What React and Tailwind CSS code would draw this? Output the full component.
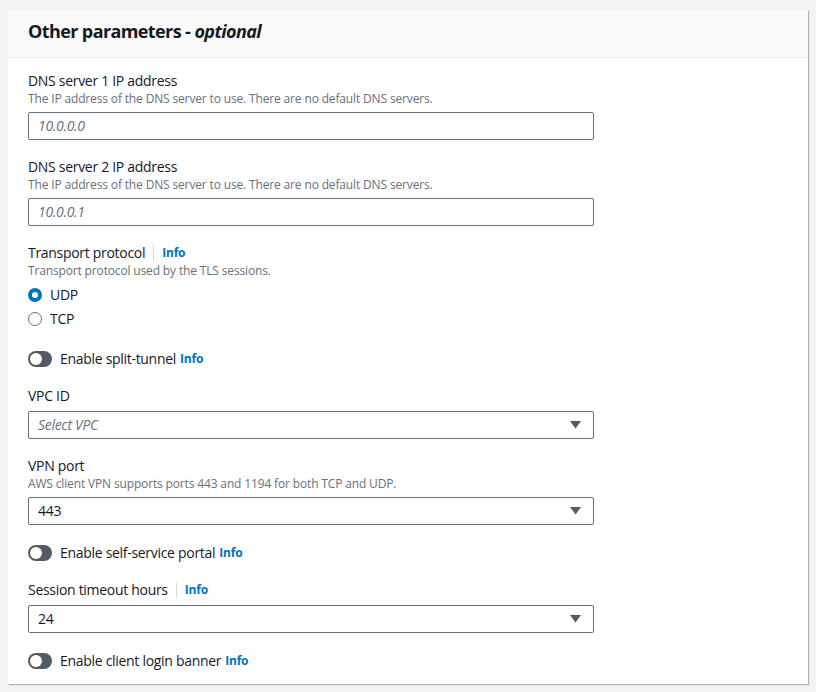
import React from "react";

const font = { fontFamily: '"Open Sans", "Noto Sans", Arial, sans-serif' };

function Info() {
  return <span className="text-xs font-bold tracking-[-0.2px] text-[#0073bb]">Info</span>;
}

function Label({ children, info, desc }) {
  return (
    <div>
      <div className="flex items-center h-5 text-sm tracking-[-0.3px] text-[#16191f]">
        <span>{children}</span>
        {info && (
          <>
            <span className="mx-2 h-4 w-px bg-[#d5dbdb]" />
            <Info />
          </>
        )}
      </div>
      {desc && <div className="h-4 text-xs leading-4 tracking-[-0.15px] text-[#687078]">{desc}</div>}
    </div>
  );
}

function TextInput({ placeholder }) {
  return (
    <div className="mt-[5px] flex h-7 w-[566px] items-center rounded-[2px] border border-[#687078] px-[9px] text-sm italic tracking-[-0.3px] text-[#687078]">
      {placeholder}
    </div>
  );
}

function Select({ value, placeholder }) {
  return (
    <div className="mt-[5px] flex h-7 w-[566px] items-center justify-between rounded-[2px] border border-[#687078] pl-[9px] pr-[12px] text-sm tracking-[-0.3px]">
      {placeholder ? (
        <span className="italic text-[#687078]">{placeholder}</span>
      ) : (
        <span className="text-[#16191f]">{value}</span>
      )}
      <svg width="11" height="8" viewBox="0 0 11 8">
        <path d="M0 0 H11 L5.5 7.5 Z" fill="#545b64" />
      </svg>
    </div>
  );
}

function Toggle({ children }) {
  return (
    <div className="flex h-[21px] items-center text-sm tracking-[-0.3px] text-[#16191f]">
      <span className="relative mr-2 h-4 w-6 rounded-full bg-[#545b64]">
        <span className="absolute left-[2px] top-[2px] h-3 w-3 rounded-full bg-white" />
      </span>
      <span className="mr-1">{children}</span>
      <Info />
    </div>
  );
}

function Radio({ checked, children }) {
  return (
    <div className="flex h-6 items-center text-sm tracking-[-0.3px] text-[#16191f]">
      {checked ? (
        <span className="mr-2 h-[14px] w-[14px] rounded-full border-[4px] border-[#0073bb] bg-white" />
      ) : (
        <span className="mr-2 h-[14px] w-[14px] rounded-full border-[1.5px] border-[#687078] bg-white" />
      )}
      <span>{children}</span>
    </div>
  );
}

export default function App() {
  return (
    <div className="min-h-screen bg-[#f2f3f3] px-2 pt-[10px]" style={font}>
      <div className="w-[800px] bg-white shadow-[1px_1px_1px_0_rgba(0,28,36,0.3)]">
        <div className="flex h-[48px] items-center border-b border-[#eaeded] bg-[#fafafa] px-5 pb-[5px]">
          <h2 className="text-lg font-bold tracking-[-0.6px] text-[#16191f]">
            Other parameters - <i>optional</i>
          </h2>
        </div>
        <div className="flex flex-col gap-[17px] px-5 pt-[13px] pb-[13px]">
          <div>
            <Label desc="The IP address of the DNS server to use. There are no default DNS servers.">
              DNS server 1 IP address
            </Label>
            <TextInput placeholder="10.0.0.0" />
          </div>
          <div>
            <Label desc="The IP address of the DNS server to use. There are no default DNS servers.">
              DNS server 2 IP address
            </Label>
            <TextInput placeholder="10.0.0.1" />
          </div>
          <div>
            <Label info desc="Transport protocol used by the TLS sessions.">
              Transport protocol
            </Label>
            <div className="mt-1">
              <Radio checked>UDP</Radio>
              <Radio>TCP</Radio>
            </div>
          </div>
          <Toggle>Enable split-tunnel</Toggle>
          <div>
            <Label>VPC ID</Label>
            <Select placeholder="Select VPC" />
          </div>
          <div>
            <Label desc="AWS client VPN supports ports 443 and 1194 for both TCP and UDP.">VPN port</Label>
            <Select value="443" />
          </div>
          <Toggle>Enable self-service portal</Toggle>
          <div>
            <Label info>Session timeout hours</Label>
            <Select value="24" />
          </div>
          <Toggle>Enable client login banner</Toggle>
        </div>
      </div>
    </div>
  );
}
